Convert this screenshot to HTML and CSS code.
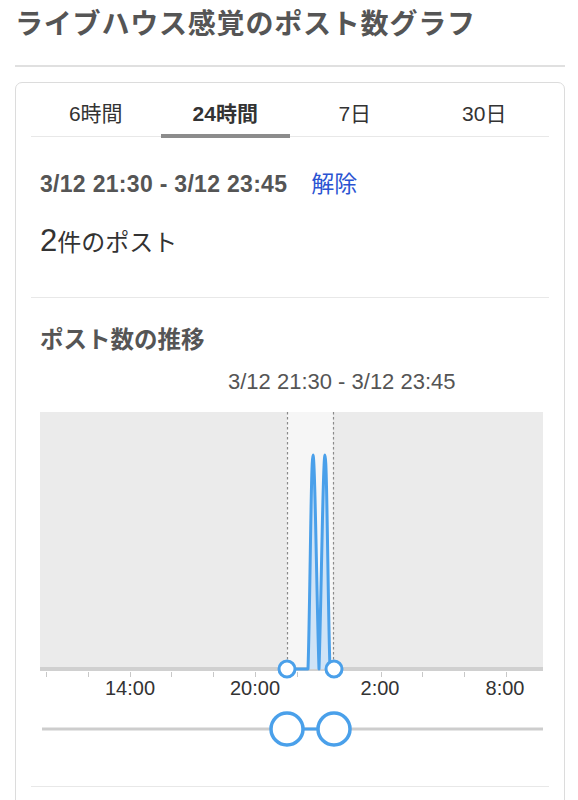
FILE: index.html
```html
<!DOCTYPE html>
<html lang="ja">
<head>
<meta charset="utf-8">
<title>ライブハウス感覚のポスト数グラフ</title>
<link rel="stylesheet" href="styles.css">
</head>
<body>
<div class="page">
  <h1 class="title">ライブハウス感覚のポスト数グラフ</h1>
  <div class="rule"></div>
  <div class="card">
    <div class="tabs">
      <div class="tab">6時間</div>
      <div class="tab active">24時間</div>
      <div class="tab">7日</div>
      <div class="tab">30日</div>
    </div>
    <div class="section">
      <div class="range">
        <span class="range-text">3/12 21:30 - 3/12 23:45</span>
        <a class="clear" href="#">解除</a>
      </div>
      <div class="count"><span class="num">2</span>件のポスト</div>
    </div>
    <div class="divider"></div>
    <div class="section">
      <div class="subhead">ポスト数の推移</div>
      <div class="chart-label">3/12 21:30 - 3/12 23:45</div>
      <svg class="chart" width="505" height="290" viewBox="0 0 505 290">
        <rect x="0" y="0" width="503" height="257" fill="#ebebeb"/>
        <rect x="247" y="0" width="46" height="257" fill="#f6f6f6"/>
        <line x1="247.5" y1="0" x2="247.5" y2="257" stroke="#8a8a8a" stroke-width="1.2" stroke-dasharray="2.5 2.5"/>
        <line x1="293.5" y1="0" x2="293.5" y2="257" stroke="#8a8a8a" stroke-width="1.2" stroke-dasharray="2.5 2.5"/>
        <rect x="0" y="255" width="503" height="4" fill="#d0d0d0"/>
        <g stroke="#c8c8c8" stroke-width="1">
          <line x1="6.5" y1="260" x2="6.5" y2="265"/>
          <line x1="48.5" y1="260" x2="48.5" y2="265"/>
          <line x1="90.5" y1="260" x2="90.5" y2="265"/>
          <line x1="131.5" y1="260" x2="131.5" y2="265"/>
          <line x1="173.5" y1="260" x2="173.5" y2="265"/>
          <line x1="215.5" y1="260" x2="215.5" y2="265"/>
          <line x1="257.5" y1="260" x2="257.5" y2="265"/>
          <line x1="299.5" y1="260" x2="299.5" y2="265"/>
          <line x1="341.5" y1="260" x2="341.5" y2="265"/>
          <line x1="382.5" y1="260" x2="382.5" y2="265"/>
          <line x1="424.5" y1="260" x2="424.5" y2="265"/>
          <line x1="466.5" y1="260" x2="466.5" y2="265"/>
        </g>
        <path d="M268,257 C270,200 271,43 273,43 C275,43 277,200 279,257 C281,200 283,43 285,43 C287,43 288,200 290,257 Z" fill="#cfe3f6"/>
        <path d="M247,257 L268,257 C270,200 271,43 273,43 C275,43 277,200 279,257 C281,200 283,43 285,43 C287,43 288,200 290,257 L294,257" fill="none" stroke="#4aa0ea" stroke-width="3" stroke-linejoin="round"/>
        <circle cx="247" cy="257" r="8" fill="#fff" stroke="#4aa0ea" stroke-width="3"/>
        <circle cx="294" cy="257" r="8" fill="#fff" stroke="#4aa0ea" stroke-width="3"/>
        <g class="axis" text-anchor="middle">
          <text x="90" y="283">14:00</text>
          <text x="215" y="283">20:00</text>
          <text x="340" y="283">2:00</text>
          <text x="465" y="283">8:00</text>
        </g>
      </svg>
      <svg class="slider" width="505" height="40" viewBox="0 0 505 40">
        <line x1="2" y1="20" x2="503" y2="20" stroke="#cdcdcd" stroke-width="3"/>
        <line x1="247" y1="20" x2="294" y2="20" stroke="#4aa0ea" stroke-width="3"/>
        <circle cx="247" cy="20" r="16" fill="#fff" stroke="#4aa0ea" stroke-width="3.5"/>
        <circle cx="294" cy="20" r="16" fill="#fff" stroke="#4aa0ea" stroke-width="3.5"/>
      </svg>
    </div>
    <div class="divider bottom"></div>
  </div>
</div>
</body>
</html>
```

FILE: styles.css
```css
html, body {
  margin: 0;
  padding: 0;
  background: #fff;
}
body {
  font-family: "Liberation Sans", "Noto Sans CJK JP", sans-serif;
  color: #333;
}
.page {
  padding: 0 13px 0 15px;
}
.title {
  margin: 0;
  padding-top: 7px;
  font-size: 28px;
  line-height: 36px;
  font-weight: bold;
  color: #555;
  letter-spacing: 0.8px;
}
.rule {
  margin-top: 22px;
  height: 2px;
  background: #e0e0e0;
}
.card {
  margin-top: 15px;
  border: 1px solid #dcdcdc;
  border-radius: 7px;
  padding: 0 15px;
  height: 760px;
}
.tabs {
  display: grid;
  grid-template-columns: repeat(4, 1fr);
  border-bottom: 1px solid #e8e8e8;
}
.tab {
  text-align: center;
  font-size: 21px;
  line-height: 28px;
  padding: 17px 0 6px;
  color: #333;
  border-bottom: 4px solid transparent;
  margin-bottom: -2px;
}
.tab.active {
  font-weight: bold;
  border-bottom-color: #8c8c8c;
}
.section {
  padding: 0 9px;
}
.range {
  margin-top: 33px;
  line-height: 28px;
  display: flex;
  align-items: center;
  gap: 24px;
}
.range-text {
  font-size: 23px;
  font-weight: bold;
  color: #555;
  letter-spacing: 0.3px;
}
.clear {
  font-size: 23px;
  color: #2a53d2;
  text-decoration: none;
}
.count {
  margin-top: 25px;
  font-size: 24px;
  line-height: 36px;
  color: #333;
}
.count .num {
  font-size: 31px;
}
.divider {
  margin-top: 36px;
  height: 1px;
  background: #e8e8e8;
}
.divider.bottom {
  margin-top: 37px;
}
.subhead {
  margin-top: 27px;
  font-size: 23.5px;
  line-height: 30px;
  font-weight: bold;
  color: #555;
}
.chart-label {
  margin-top: 14px;
  padding-left: 188px;
  font-size: 22px;
  line-height: 26px;
  color: #555;
}
.chart {
  display: block;
  margin-top: 17px;
}
.axis {
  font-family: "Liberation Sans", sans-serif;
  font-size: 20px;
  fill: #333;
}
.slider {
  display: block;
  margin-top: 7px;
}
```
